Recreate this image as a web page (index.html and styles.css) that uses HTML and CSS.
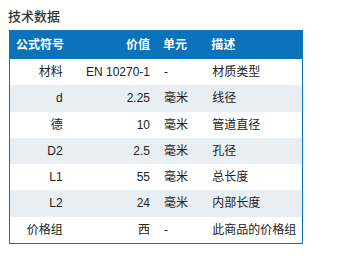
FILE: index.html
```html
<!DOCTYPE html>
<html lang="zh">
<head>
<meta charset="utf-8">
<link rel="stylesheet" href="styles.css">
</head>
<body>
<h3 class="title">技术数据</h3>
<table class="spec">
  <colgroup>
    <col class="c1"><col class="c2"><col class="c3"><col class="c4">
  </colgroup>
  <thead>
    <tr><th class="left">公式符号</th><th class="right">价值</th><th class="left">单元</th><th class="left">描述</th></tr>
  </thead>
  <tbody>
    <tr><td class="right">材料</td><td class="right">EN 10270-1</td><td>-</td><td>材质类型</td></tr>
    <tr class="alt"><td class="right">d</td><td class="right">2.25</td><td>毫米</td><td>线径</td></tr>
    <tr><td class="right">德</td><td class="right">10</td><td>毫米</td><td>管道直径</td></tr>
    <tr class="alt"><td class="right">D2</td><td class="right">2.5</td><td>毫米</td><td>孔径</td></tr>
    <tr><td class="right">L1</td><td class="right">55</td><td>毫米</td><td>总长度</td></tr>
    <tr class="alt"><td class="right">L2</td><td class="right">24</td><td>毫米</td><td>内部长度</td></tr>
    <tr><td class="right">价格组</td><td class="right">西</td><td>-</td><td>此商品的价格组</td></tr>
  </tbody>
</table>
</body>
</html>
```
FILE: styles.css
```css
html, body {
  margin: 0;
  padding: 0;
  background: #ffffff;
}
body {
  padding: 8px 8px 8px 9px;
  font-family: "Liberation Sans", Arial, "Noto Sans CJK SC", sans-serif;
  font-size: 12px;
  color: #222;
}
.title {
  margin: 0 0 4px -1px;
  font-size: 13px;
  line-height: 18px;
  font-weight: 500;
  color: #333;
}
.spec {
  border-collapse: collapse;
  border: 1px solid #0b73b9;
  width: 294px;
  table-layout: fixed;
}
.c1 { width: 60px; }
.c2 { width: 87px; }
.c3 { width: 48px; }
.c4 { width: 97px; }
.spec th {
  background: #0b73b9;
  color: #fff;
  font-weight: bold;
  padding: 5px 7px 5px 6px;
  line-height: 18px;
  white-space: nowrap;
}
.spec td {
  padding: 4px 7px;
  line-height: 18.3px;
  white-space: nowrap;
  color: #222;
}
.spec tr.alt td {
  background: #e9eef2;
}
.left { text-align: left; }
.right { text-align: right; }
```
